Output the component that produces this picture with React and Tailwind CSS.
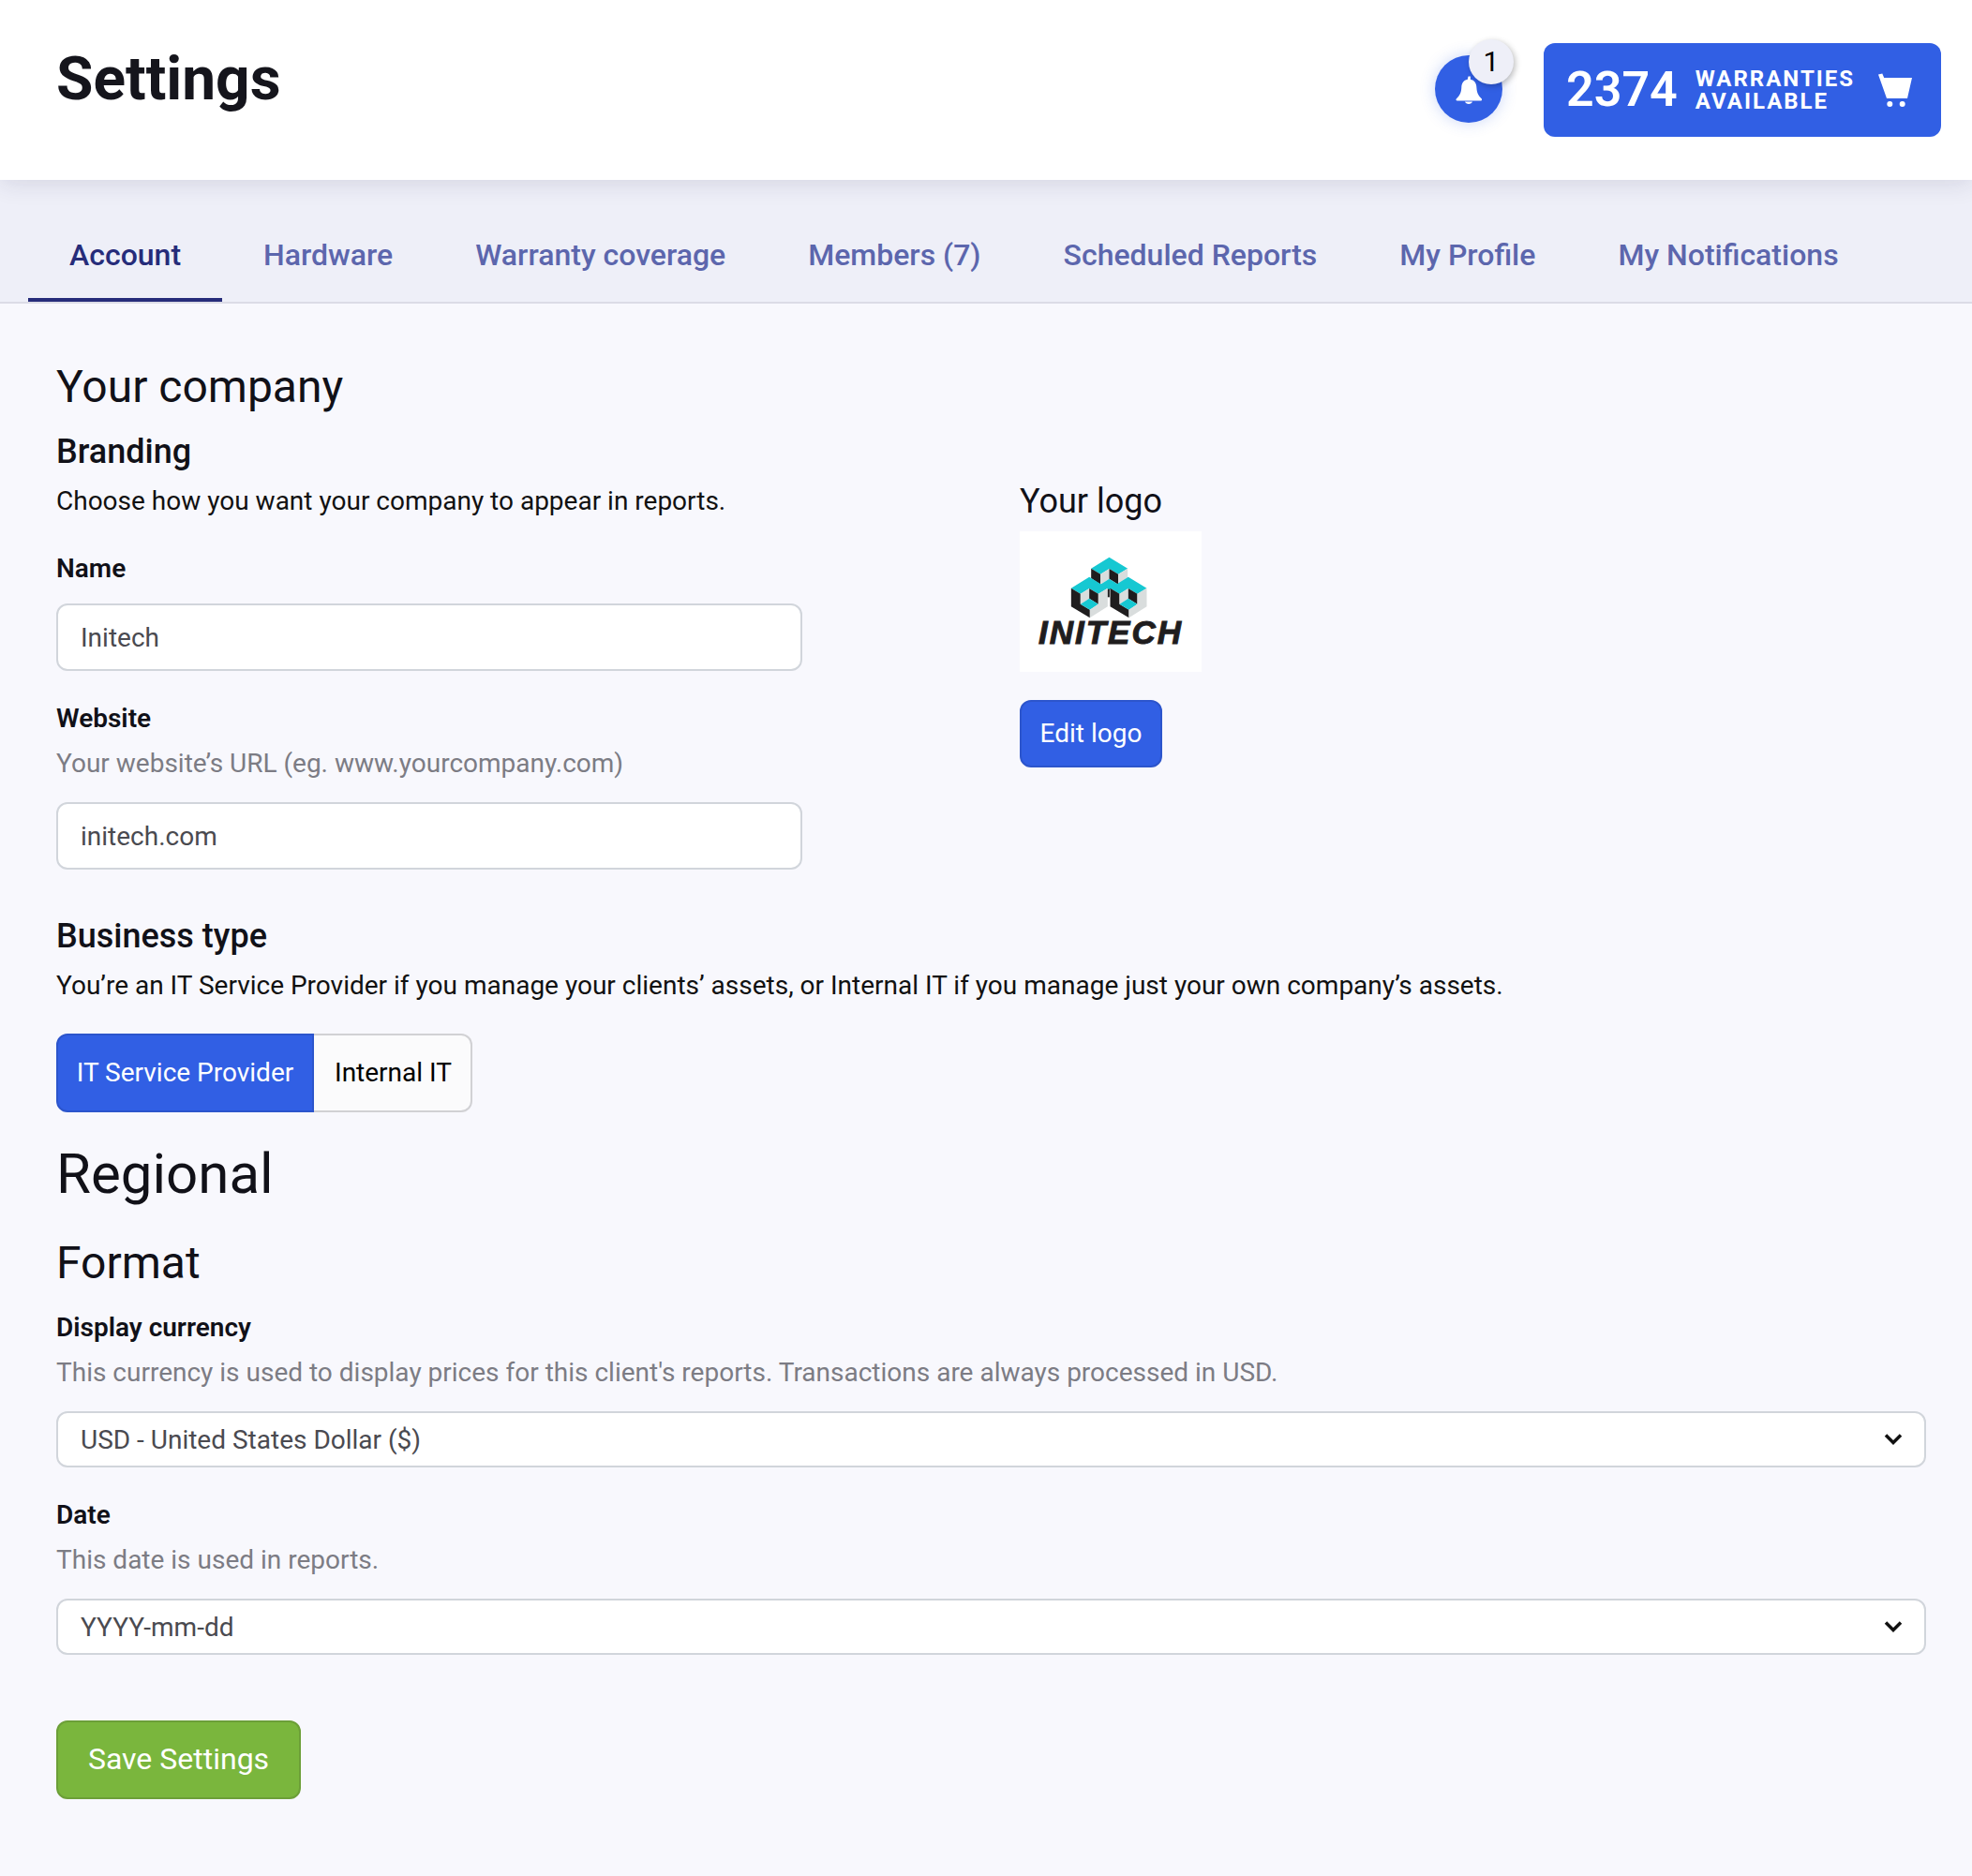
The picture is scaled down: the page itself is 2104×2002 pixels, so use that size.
import React from 'react';

const tabs = ['Account', 'Hardware', 'Warranty coverage', 'Members (7)', 'Scheduled Reports', 'My Profile', 'My Notifications'];

function BellIcon() {
  return (
    <svg width="28" height="30" viewBox="0 0 28 30" fill="white" className="mt-[2px]">
      <path d="M12.800 .5h2.400v3.300c4.500.9 6.300 4.300 6.500 8.700.3 5 1.500 8.200 5.500 12 .7.7.3 2-.8 2H.9c-1.100 0-1.500-1.300-.8-2 4-3.800 5.200-7 5.500-12 .2-4.400 2-7.800 6.500-8.700z" transform="translate(.7 0)" />
      <path d="M10 27.500h8c-.5 1.500-2 2.500-4 2.500s-3.500-1-4-2.500z" />
    </svg>
  );
}

function CartIcon() {
  return (
    <svg width="36" height="36" viewBox="0 0 36 36" fill="white">
      <path d="M0 1.500L4.300.5 6.200 5H36l-5 22H9z" />
      <circle cx="12.300" cy="33" r="3" />
      <circle cx="25.700" cy="33" r="3" />
    </svg>
  );
}

function Chevron() {
  return (
    <svg width="20" height="14" viewBox="0 0 20 14" fill="none" stroke="#111" strokeWidth="3.500" className="absolute right-[23px] top-1/2 -translate-y-1/2">
      <path d="M2 2.500l8 8 8-8" />
    </svg>
  );
}

function LowerCube({ dx }) {
  return (
    <g transform={`translate(${dx} 0)`}>
      <polygon points="128,127 186,91 245,127 215,145 186,128 158,145" fill="#16c8d2" />
      <polygon points="128,127 158,145 158,178 188,196 188,222 128,186" fill="#1f1d1e" />
      <polygon points="158,145 186,128 186,160 158,178" fill="#d9dddd" />
      <polygon points="186,128 215,145 215,178 186,160" fill="#1f1d1e" />
      <polygon points="158,178 186,160 215,178 188,196" fill="#16c8d2" />
      <polygon points="215,145 245,127 245,186 188,222 188,196 215,178" fill="#d9dddd" />
    </g>
  );
}

function InitechLogo() {
  return (
    <div className="w-[194px] h-[150px] bg-white flex flex-col items-center">
      <svg width="87" height="70" viewBox="120 20 260 210" className="mt-[25px] mr-[4px]">
        {/* top cube, its lower part is hidden behind the other two */}
        <polygon points="192,64 250,28 309,64 279,82 250,65 222,82" fill="#16c8d2" />
        <polygon points="192,64 222,82 222,115 192,95" fill="#1f1d1e" />
        <polygon points="222,82 250,65 250,97 222,115" fill="#d9dddd" />
        <polygon points="250,65 279,82 279,115 250,97" fill="#1f1d1e" />
        <polygon points="279,82 309,64 309,94 279,115" fill="#d9dddd" />
        <polygon points="222,115 250,97 279,115 250,133" fill="#16c8d2" />
        <rect x="243" y="130" width="8" height="26" fill="#1f1d1e" />
        <LowerCube dx={0} />
        <LowerCube dx={125} />
      </svg>
      <div className="mt-[-2px] font-['Liberation_Sans',sans-serif] italic font-bold text-[#1f1d1e] text-[35px] leading-[30px] tracking-[2px] [-webkit-text-stroke:1px_#1f1d1e]">INITECH</div>
    </div>
  );
}

function Field({ label, help, value }) {
  return (
    <div>
      <div className="text-[28px] leading-[34px] font-semibold text-[#111118]">{label}</div>
      {help && <div className="mt-[14px] text-[28px] leading-[34px] text-[#7c7c84]">{help}</div>}
      <div className={`${help ? 'mt-[24px]' : 'mt-[20px]'} w-[796px] h-[72px] flex items-center px-[24px] pt-[2px] bg-white border-2 border-[#d1d5db] rounded-[12px] text-[28px] text-[#4a4a50]`}>{value}</div>
    </div>
  );
}

function SelectField({ label, help, value }) {
  return (
    <div>
      <div className="text-[28px] leading-[34px] font-semibold text-[#111118]">{label}</div>
      <div className="mt-[14px] text-[28px] leading-[34px] text-[#7c7c84]">{help}</div>
      <div className="relative mt-[24px] w-full h-[60px] flex items-center px-[24px] pt-[2px] bg-white border-2 border-[#d1d5db] rounded-[12px] text-[28px] text-[#4a4a50]">
        {value}
        <Chevron />
      </div>
    </div>
  );
}

export default function App() {
  return (
    <div className="min-h-[2002px] bg-[#f8f8fd] font-['Roboto',sans-serif] text-[#111118]">
      {/* header */}
      <div className="relative z-10 h-[192px] bg-white shadow-[0_4px_24px_rgba(30,30,70,0.12)] flex items-start justify-between pl-[60px] pr-[33px]">
        <h1 className="mt-[47px] text-[64px] leading-[76px] font-bold text-[#15151c]">Settings</h1>
        <div className="flex items-start">
          <div className="relative mt-[59px] w-[72px] h-[72px] rounded-full bg-[#315fe4] flex items-center justify-center shadow-[0_0_16px_rgba(49,95,228,0.25)]">
            <BellIcon />
            <div className="absolute left-[36px] top-[-17px] w-[48px] h-[48px] pb-[2px] rounded-full bg-[#eeeff8] shadow-[2px_2px_6px_rgba(0,0,0,0.25)] flex items-center justify-center text-[30px] text-black">1</div>
          </div>
          <div className="ml-[44px] mt-[46px] w-[424px] h-[100px] rounded-[12px] bg-[#315fe4] flex items-center pl-[24px] text-white">
            <span className="text-[52px] leading-none font-semibold">2374</span>
            <span className="ml-[19px] text-[24px] leading-[24px] font-bold tracking-[2px] uppercase">Warranties<br />Available</span>
            <span className="ml-[25px]"><CartIcon /></span>
          </div>
        </div>
      </div>

      {/* tabs */}
      <div className="h-[132px] bg-[#eeeff8] border-b-2 border-[#dcdce6] flex items-end pl-[30px]">
        {tabs.map((t, i) => (
          <div key={t} className={`h-[69px] px-[44px] text-[32px] leading-[38px] font-medium border-b-4 ${i === 0 ? 'text-[#262c7a] border-[#262c7a]' : 'text-[#5c66ad] border-transparent'}`}>{t}</div>
        ))}
      </div>

      {/* content */}
      <div className="pl-[60px] pr-[49px]">
        <div className="flex">
          <div className="w-[1028px] shrink-0">
            <h2 className="mt-[60px] text-[48px] leading-[58px] font-normal">Your company</h2>
            <h3 className="mt-[18px] text-[36px] leading-[44px] font-medium">Branding</h3>
            <p className="mt-[14px] text-[28px] leading-[34px] text-[#111]">Choose how you want your company to appear in reports.</p>
            <div className="mt-[38px]">
              <Field label="Name" value="Initech" />
            </div>
            <div className="mt-[34px]">
              <Field label="Website" help="Your website’s URL (eg. www.yourcompany.com)" value="initech.com" />
            </div>
          </div>
          <div className="pt-[189px]">
            <div className="text-[36px] leading-[44px]">Your logo</div>
            <div className="mt-[10px]"><InitechLogo /></div>
            <button className="mt-[30px] w-[152px] h-[72px] rounded-[12px] bg-[#315fe4] border-2 border-[#2c55cc] text-white text-[28px]">Edit logo</button>
          </div>
        </div>

        <h3 className="mt-[49px] text-[36px] leading-[44px] font-medium">Business type</h3>
        <p className="mt-[14px] text-[28px] leading-[34px] text-[#111]">You’re an IT Service Provider if you manage your clients’ assets, or Internal IT if you manage just your own company’s assets.</p>
        <div className="mt-[34px] flex">
          <button className="h-[84px] w-[275px] rounded-l-[12px] bg-[#315fe4] border-2 border-[#2c55cc] text-white text-[28px]">IT Service Provider</button>
          <button className="h-[84px] w-[169px] pl-[2px] rounded-r-[12px] bg-[#fbfbfc] border-2 border-l-0 border-[#d1d1d4] text-black text-[28px]">Internal IT</button>
        </div>

        <h2 className="mt-[30px] text-[60px] leading-[72px] font-normal">Regional</h2>
        <h3 className="mt-[30px] text-[48px] leading-[58px] font-normal">Format</h3>
        <div className="mt-[23px]">
          <SelectField label="Display currency" help="This currency is used to display prices for this client's reports. Transactions are always processed in USD." value="USD - United States Dollar ($)" />
        </div>
        <div className="mt-[34px]">
          <SelectField label="Date" help="This date is used in reports." value="YYYY-mm-dd" />
        </div>
        <button className="mt-[70px] w-[261px] h-[84px] pb-[2px] rounded-[12px] bg-[#7ab63d] border-2 border-[#6c9f38] text-white text-[32px]">Save Settings</button>
      </div>
    </div>
  );
}
